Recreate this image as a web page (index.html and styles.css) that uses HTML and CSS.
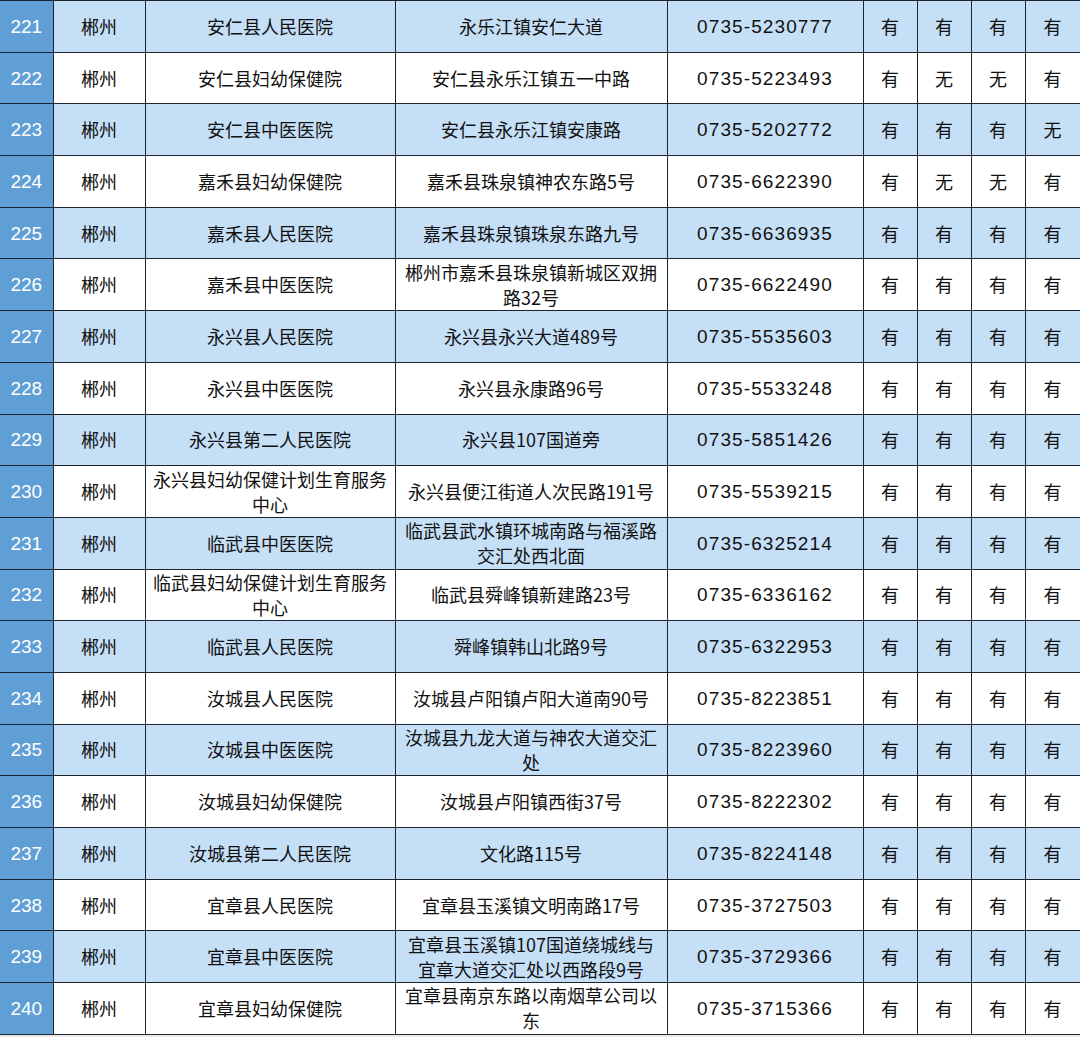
FILE: index.html
```html
<!DOCTYPE html>
<html lang="zh-CN">
<head>
<meta charset="utf-8">
<title>郴州医院列表</title>
<link rel="stylesheet" href="styles.css">
</head>
<body>
<table class="grid">
<colgroup>
<col class="c-idx"><col class="c-city"><col class="c-name"><col class="c-addr"><col class="c-tel"><col class="c-f"><col class="c-f"><col class="c-f"><col class="c-f4">
</colgroup>
<tbody>
<tr class="alt"><td class="idx">221</td><td>郴州</td><td>安仁县人民医院</td><td>永乐江镇安仁大道</td><td class="tel">0735-5230777</td><td>有</td><td>有</td><td>有</td><td>有</td></tr>
<tr><td class="idx">222</td><td>郴州</td><td>安仁县妇幼保健院</td><td>安仁县永乐江镇五一中路</td><td class="tel">0735-5223493</td><td>有</td><td>无</td><td>无</td><td>有</td></tr>
<tr class="alt"><td class="idx">223</td><td>郴州</td><td>安仁县中医医院</td><td>安仁县永乐江镇安康路</td><td class="tel">0735-5202772</td><td>有</td><td>有</td><td>有</td><td>无</td></tr>
<tr><td class="idx">224</td><td>郴州</td><td>嘉禾县妇幼保健院</td><td>嘉禾县珠泉镇神农东路5号</td><td class="tel">0735-6622390</td><td>有</td><td>无</td><td>无</td><td>有</td></tr>
<tr class="alt"><td class="idx">225</td><td>郴州</td><td>嘉禾县人民医院</td><td>嘉禾县珠泉镇珠泉东路九号</td><td class="tel">0735-6636935</td><td>有</td><td>有</td><td>有</td><td>有</td></tr>
<tr><td class="idx">226</td><td>郴州</td><td>嘉禾县中医医院</td><td>郴州市嘉禾县珠泉镇新城区双拥路32号</td><td class="tel">0735-6622490</td><td>有</td><td>有</td><td>有</td><td>有</td></tr>
<tr class="alt"><td class="idx">227</td><td>郴州</td><td>永兴县人民医院</td><td>永兴县永兴大道489号</td><td class="tel">0735-5535603</td><td>有</td><td>有</td><td>有</td><td>有</td></tr>
<tr><td class="idx">228</td><td>郴州</td><td>永兴县中医医院</td><td>永兴县永康路96号</td><td class="tel">0735-5533248</td><td>有</td><td>有</td><td>有</td><td>有</td></tr>
<tr class="alt"><td class="idx">229</td><td>郴州</td><td>永兴县第二人民医院</td><td>永兴县107国道旁</td><td class="tel">0735-5851426</td><td>有</td><td>有</td><td>有</td><td>有</td></tr>
<tr><td class="idx">230</td><td>郴州</td><td>永兴县妇幼保健计划生育服务中心</td><td>永兴县便江街道人次民路191号</td><td class="tel">0735-5539215</td><td>有</td><td>有</td><td>有</td><td>有</td></tr>
<tr class="alt"><td class="idx">231</td><td>郴州</td><td>临武县中医医院</td><td>临武县武水镇环城南路与福溪路交汇处西北面</td><td class="tel">0735-6325214</td><td>有</td><td>有</td><td>有</td><td>有</td></tr>
<tr><td class="idx">232</td><td>郴州</td><td>临武县妇幼保健计划生育服务中心</td><td>临武县舜峰镇新建路23号</td><td class="tel">0735-6336162</td><td>有</td><td>有</td><td>有</td><td>有</td></tr>
<tr class="alt"><td class="idx">233</td><td>郴州</td><td>临武县人民医院</td><td>舜峰镇韩山北路9号</td><td class="tel">0735-6322953</td><td>有</td><td>有</td><td>有</td><td>有</td></tr>
<tr><td class="idx">234</td><td>郴州</td><td>汝城县人民医院</td><td>汝城县卢阳镇卢阳大道南90号</td><td class="tel">0735-8223851</td><td>有</td><td>有</td><td>有</td><td>有</td></tr>
<tr class="alt"><td class="idx">235</td><td>郴州</td><td>汝城县中医医院</td><td>汝城县九龙大道与神农大道交汇处</td><td class="tel">0735-8223960</td><td>有</td><td>有</td><td>有</td><td>有</td></tr>
<tr><td class="idx">236</td><td>郴州</td><td>汝城县妇幼保健院</td><td>汝城县卢阳镇西街37号</td><td class="tel">0735-8222302</td><td>有</td><td>有</td><td>有</td><td>有</td></tr>
<tr class="alt"><td class="idx">237</td><td>郴州</td><td>汝城县第二人民医院</td><td>文化路115号</td><td class="tel">0735-8224148</td><td>有</td><td>有</td><td>有</td><td>有</td></tr>
<tr><td class="idx">238</td><td>郴州</td><td>宜章县人民医院</td><td>宜章县玉溪镇文明南路17号</td><td class="tel">0735-3727503</td><td>有</td><td>有</td><td>有</td><td>有</td></tr>
<tr class="alt"><td class="idx">239</td><td>郴州</td><td>宜章县中医医院</td><td>宜章县玉溪镇107国道绕城线与宜章大道交汇处以西路段9号</td><td class="tel">0735-3729366</td><td>有</td><td>有</td><td>有</td><td>有</td></tr>
<tr><td class="idx">240</td><td>郴州</td><td>宜章县妇幼保健院</td><td>宜章县南京东路以南烟草公司以东</td><td class="tel">0735-3715366</td><td>有</td><td>有</td><td>有</td><td>有</td></tr>
</tbody>
</table>
</body>
</html>
```
FILE: styles.css
```css
html, body {
  margin: 0;
  padding: 0;
  background: #e9e9e9;
}
body {
  font-family: "Noto Sans CJK SC", "Noto Sans", sans-serif;
  font-size: 18px;
  color: #111;
}
.grid {
  width: 1080px;
  table-layout: fixed;
  border-collapse: collapse;
}
.c-idx { width: 53px; }
.c-city { width: 92px; }
.c-name { width: 250px; }
.c-addr { width: 272px; }
.c-tel { width: 196px; }
.c-f { width: 54px; }
.c-f4 { width: 55px; }
.grid tr {
  height: 51.7px;
}
.grid td {
  border: 1.5px solid #1c252d;
  padding: 0 5px;
  text-align: center;
  vertical-align: middle;
  line-height: 25px;
  background: #ffffff;
}
.grid tr.alt td {
  background: #c5dff7;
}
.grid td.idx,
.grid tr.alt td.idx {
  background: #609fd6;
  color: #ffffff;
  border-left: none;
  font-family: "Liberation Sans", "Noto Sans CJK SC", sans-serif;
  font-size: 19px;
}
.grid td.tel {
  font-family: "Liberation Sans", "Noto Sans CJK SC", sans-serif;
  font-size: 19px;
  letter-spacing: 1.1px;
}
```
